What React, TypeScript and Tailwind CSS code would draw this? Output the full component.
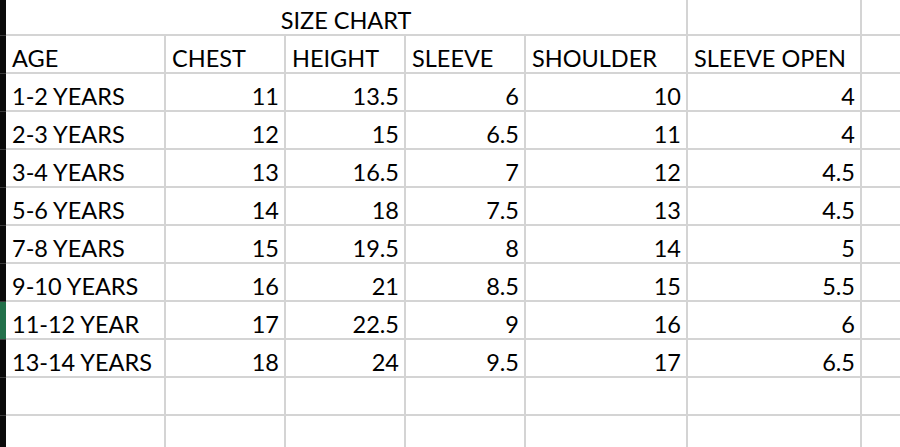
const rows: [string, string, string, string, string, string][] = [
  ['1-2 YEARS', '11', '13.5', '6', '10', '4'],
  ['2-3 YEARS', '12', '15', '6.5', '11', '4'],
  ['3-4 YEARS', '13', '16.5', '7', '12', '4.5'],
  ['5-6 YEARS', '14', '18', '7.5', '13', '4.5'],
  ['7-8 YEARS', '15', '19.5', '8', '14', '5'],
  ['9-10 YEARS', '16', '21', '8.5', '15', '5.5'],
  ['11-12 YEAR', '17', '22.5', '9', '16', '6'],
  ['13-14 YEARS', '18', '24', '9.5', '17', '6.5'],
];

const headers = ['AGE', 'CHEST', 'HEIGHT', 'SLEEVE', 'SHOULDER', 'SLEEVE OPEN'];
const widths = ['w-[160px]', 'w-[120px]', 'w-[120px]', 'w-[120px]', 'w-[162px]', 'w-[174px]'];

function Cell({ w, right, h = 'h-[38px]', children }: { w: string; right?: boolean; h?: string; children?: React.ReactNode }) {
  return (
    <div
      className={`${w} ${h} shrink-0 flex items-end pb-[1px] border-r-2 border-b-2 border-[#d4d4d4] leading-[26px] ${
        right ? 'justify-end pr-[5px]' : 'pl-[6px]'
      }`}
    >
      {children}
    </div>
  );
}

function Row({ cells, right }: { cells: string[]; right?: boolean }) {
  return (
    <div className="flex">
      {cells.map((c, i) => (
        <Cell key={i} w={widths[i]} right={right && i > 0}>
          {c}
        </Cell>
      ))}
      <div className="flex-1 h-[38px] border-b-2 border-[#d4d4d4]" />
    </div>
  );
}

export default function App() {
  const bar = Array.from({ length: 12 });
  return (
    <div
      className="w-[900px] h-[447px] overflow-hidden bg-white flex text-black text-[23.5px]"
      style={{ fontFamily: 'Lato, "Open Sans", sans-serif' }}
    >
      <div className="w-[6px] shrink-0 flex flex-col bg-[#0b0b0b]">
        <div className="h-[36px] shrink-0 border-b border-[#3a3a3a]" />
        {bar.map((_, i) => (
          <div
            key={i}
            className={`h-[38px] shrink-0 border-b border-[#3a3a3a] ${i === 7 ? 'bg-[#22704a]' : ''}`}
          />
        ))}
      </div>
      <div className="flex-1 flex flex-col">
        <div className="flex">
          <div className="w-[682px] h-[36px] shrink-0 flex items-end justify-center pb-[1px] border-r-2 border-b-2 border-[#d4d4d4] leading-[26px]">
            SIZE CHART
          </div>
          <Cell w="w-[174px]" h="h-[36px]" />
          <div className="flex-1 h-[36px] border-b-2 border-[#d4d4d4]" />
        </div>
        <Row cells={headers} />
        {rows.map((r, i) => (
          <Row key={i} cells={r} right />
        ))}
        <Row cells={['', '', '', '', '', '']} />
        <Row cells={['', '', '', '', '', '']} />
      </div>
    </div>
  );
}
